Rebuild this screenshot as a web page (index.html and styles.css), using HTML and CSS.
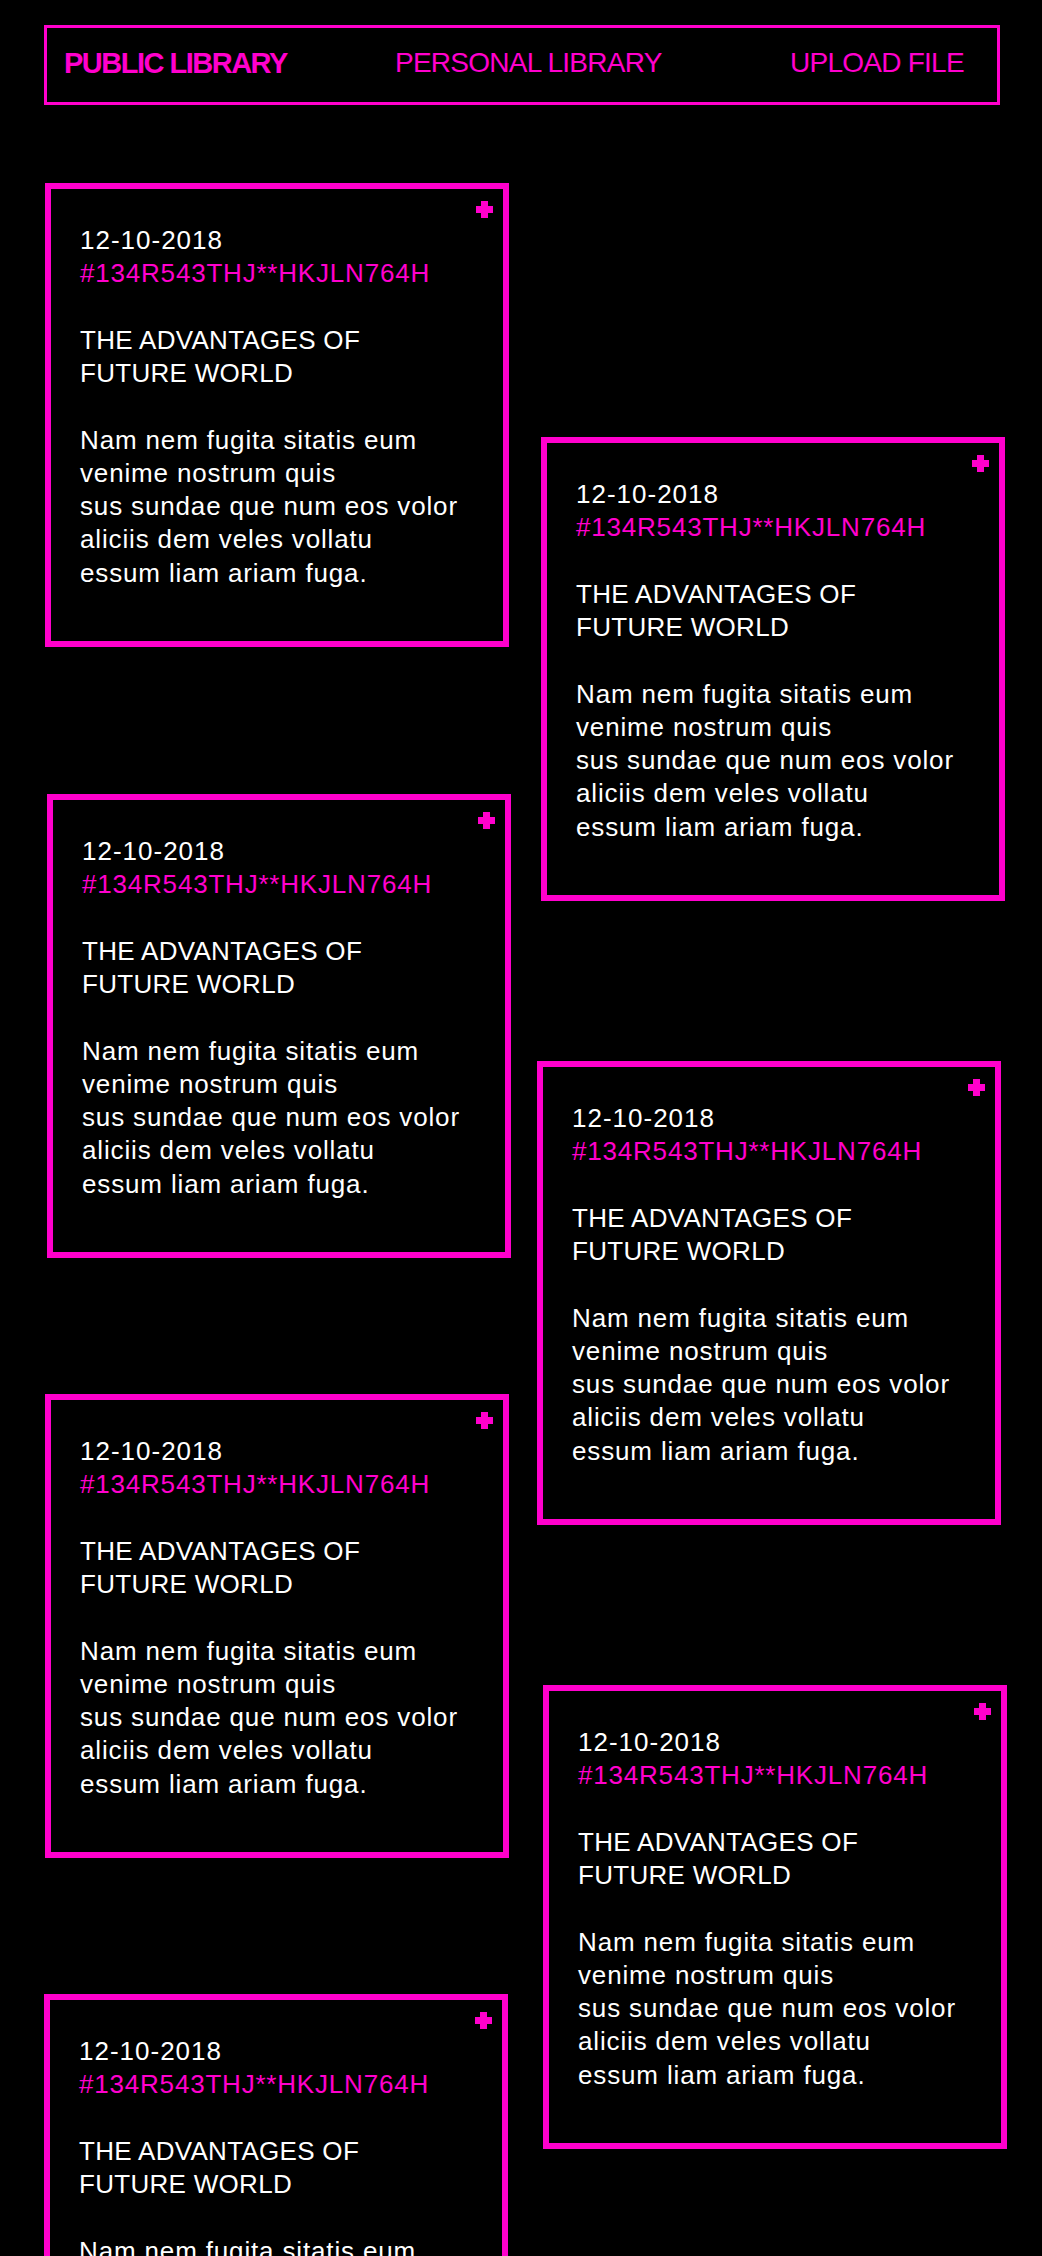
FILE: index.html
```html
<!DOCTYPE html>
<html lang="en">
<head>
<meta charset="utf-8">
<title>Public Library</title>
<link rel="stylesheet" href="styles.css">
</head>
<body>
<div class="page">
  <header class="topnav">
    <a class="topnav__item topnav__item--active" href="#">PUBLIC LIBRARY</a>
    <a class="topnav__item" href="#">PERSONAL LIBRARY</a>
    <a class="topnav__item" href="#">UPLOAD FILE</a>
  </header>

  <main class="feed">
    <div class="col col--left">
      <article class="card">
        <span class="card__add" aria-label="add"><svg viewBox="0 0 17 17" width="17" height="17"><path d="M5 0h7v5h5v7h-5v5H5v-5H0V5h5z"/></svg></span>
        <p class="card__date">12-10-2018</p>
        <p class="card__id">#134R543THJ**HKJLN764H</p>
        <h2 class="card__title">THE ADVANTAGES OF<br>FUTURE WORLD</h2>
        <p class="card__body">Nam nem fugita sitatis eum<br>venime nostrum quis<br>sus sundae que num eos volor<br>aliciis dem veles vollatu<br>essum liam ariam fuga.</p>
      </article>
      <article class="card card--gap-lg card--nudge-r2">
        <span class="card__add" aria-label="add"><svg viewBox="0 0 17 17" width="17" height="17"><path d="M5 0h7v5h5v7h-5v5H5v-5H0V5h5z"/></svg></span>
        <p class="card__date">12-10-2018</p>
        <p class="card__id">#134R543THJ**HKJLN764H</p>
        <h2 class="card__title">THE ADVANTAGES OF<br>FUTURE WORLD</h2>
        <p class="card__body">Nam nem fugita sitatis eum<br>venime nostrum quis<br>sus sundae que num eos volor<br>aliciis dem veles vollatu<br>essum liam ariam fuga.</p>
      </article>
      <article class="card">
        <span class="card__add" aria-label="add"><svg viewBox="0 0 17 17" width="17" height="17"><path d="M5 0h7v5h5v7h-5v5H5v-5H0V5h5z"/></svg></span>
        <p class="card__date">12-10-2018</p>
        <p class="card__id">#134R543THJ**HKJLN764H</p>
        <h2 class="card__title">THE ADVANTAGES OF<br>FUTURE WORLD</h2>
        <p class="card__body">Nam nem fugita sitatis eum<br>venime nostrum quis<br>sus sundae que num eos volor<br>aliciis dem veles vollatu<br>essum liam ariam fuga.</p>
      </article>
      <article class="card card--nudge-l1">
        <span class="card__add" aria-label="add"><svg viewBox="0 0 17 17" width="17" height="17"><path d="M5 0h7v5h5v7h-5v5H5v-5H0V5h5z"/></svg></span>
        <p class="card__date">12-10-2018</p>
        <p class="card__id">#134R543THJ**HKJLN764H</p>
        <h2 class="card__title">THE ADVANTAGES OF<br>FUTURE WORLD</h2>
        <p class="card__body">Nam nem fugita sitatis eum<br>venime nostrum quis<br>sus sundae que num eos volor<br>aliciis dem veles vollatu<br>essum liam ariam fuga.</p>
      </article>
    </div>

    <div class="col col--right">
      <article class="card">
        <span class="card__add" aria-label="add"><svg viewBox="0 0 17 17" width="17" height="17"><path d="M5 0h7v5h5v7h-5v5H5v-5H0V5h5z"/></svg></span>
        <p class="card__date">12-10-2018</p>
        <p class="card__id">#134R543THJ**HKJLN764H</p>
        <h2 class="card__title">THE ADVANTAGES OF<br>FUTURE WORLD</h2>
        <p class="card__body">Nam nem fugita sitatis eum<br>venime nostrum quis<br>sus sundae que num eos volor<br>aliciis dem veles vollatu<br>essum liam ariam fuga.</p>
      </article>
      <article class="card card--nudge-l4">
        <span class="card__add" aria-label="add"><svg viewBox="0 0 17 17" width="17" height="17"><path d="M5 0h7v5h5v7h-5v5H5v-5H0V5h5z"/></svg></span>
        <p class="card__date">12-10-2018</p>
        <p class="card__id">#134R543THJ**HKJLN764H</p>
        <h2 class="card__title">THE ADVANTAGES OF<br>FUTURE WORLD</h2>
        <p class="card__body">Nam nem fugita sitatis eum<br>venime nostrum quis<br>sus sundae que num eos volor<br>aliciis dem veles vollatu<br>essum liam ariam fuga.</p>
      </article>
      <article class="card card--nudge-r2">
        <span class="card__add" aria-label="add"><svg viewBox="0 0 17 17" width="17" height="17"><path d="M5 0h7v5h5v7h-5v5H5v-5H0V5h5z"/></svg></span>
        <p class="card__date">12-10-2018</p>
        <p class="card__id">#134R543THJ**HKJLN764H</p>
        <h2 class="card__title">THE ADVANTAGES OF<br>FUTURE WORLD</h2>
        <p class="card__body">Nam nem fugita sitatis eum<br>venime nostrum quis<br>sus sundae que num eos volor<br>aliciis dem veles vollatu<br>essum liam ariam fuga.</p>
      </article>
    </div>
  </main>
</div>
</body>
</html>
```

FILE: styles.css
```css
* {
  box-sizing: border-box;
}

html, body {
  margin: 0;
  padding: 0;
  background: #000;
}

body {
  font-family: "Liberation Sans", Arial, Helvetica, sans-serif;
  color: #fff;
}

.page {
  height: 2256px;
  overflow: hidden;
  background: #000;
}

/* ---------- top navigation ---------- */
.topnav {
  margin: 25px 42px 0 44px;
  height: 80px;
  border: 3px solid #ff00cc;
  display: grid;
  grid-template-columns: 331px 395px auto;
  align-items: center;
  padding: 0 0 4px 17px;
}

.topnav__item {
  color: #ff00cc;
  text-decoration: none;
  font-size: 28px;
  line-height: 32px;
  letter-spacing: -0.75px;
  white-space: nowrap;
}

.topnav__item--active {
  font-weight: 700;
  font-size: 29px;
  letter-spacing: -1.5px;
}

/* ---------- feed ---------- */
.feed {
  display: flex;
  align-items: flex-start;
  padding-left: 45px;
}

.col {
  display: flex;
  flex-direction: column;
  width: 464px;
  flex: none;
}

.col--left {
  padding-top: 78px;
}

.col--right {
  margin-left: 32px;
  padding-top: 332px;
}

.col--left .card + .card {
  margin-top: 136px;
}

.col--right .card + .card {
  margin-top: 160px;
}

.col--left .card.card--gap-lg {
  margin-top: 147px;
}

.card {
  position: relative;
  width: 464px;
  height: 464px;
  flex: none;
  border: 6px solid #ff00cc;
  padding: 35px 20px 0 29px;
  font-size: 26px;
  line-height: 33.25px;
}

.card--nudge-r2 { margin-left: 2px; }
.card--nudge-l1 { margin-left: -1px; }
.card--nudge-l4 { margin-left: -4px; }

.card__add {
  position: absolute;
  top: 12px;
  right: 10px;
  width: 17px;
  height: 17px;
  display: block;
}

.card__add svg {
  display: block;
  fill: #ff00cc;
}

.card p,
.card h2 {
  margin: 0;
}

.card__date {
  color: #fff;
  letter-spacing: 1px;
}

.card__id {
  color: #ff00cc;
  letter-spacing: 0.8px;
}

.card__title {
  margin-top: 33.25px !important;
  font-weight: 400;
  font-size: 26px;
  letter-spacing: 0.3px;
  color: #fff;
}

.card__body {
  margin-top: 33.25px !important;
  color: #fff;
  letter-spacing: 0.85px;
  white-space: nowrap;
}
```
